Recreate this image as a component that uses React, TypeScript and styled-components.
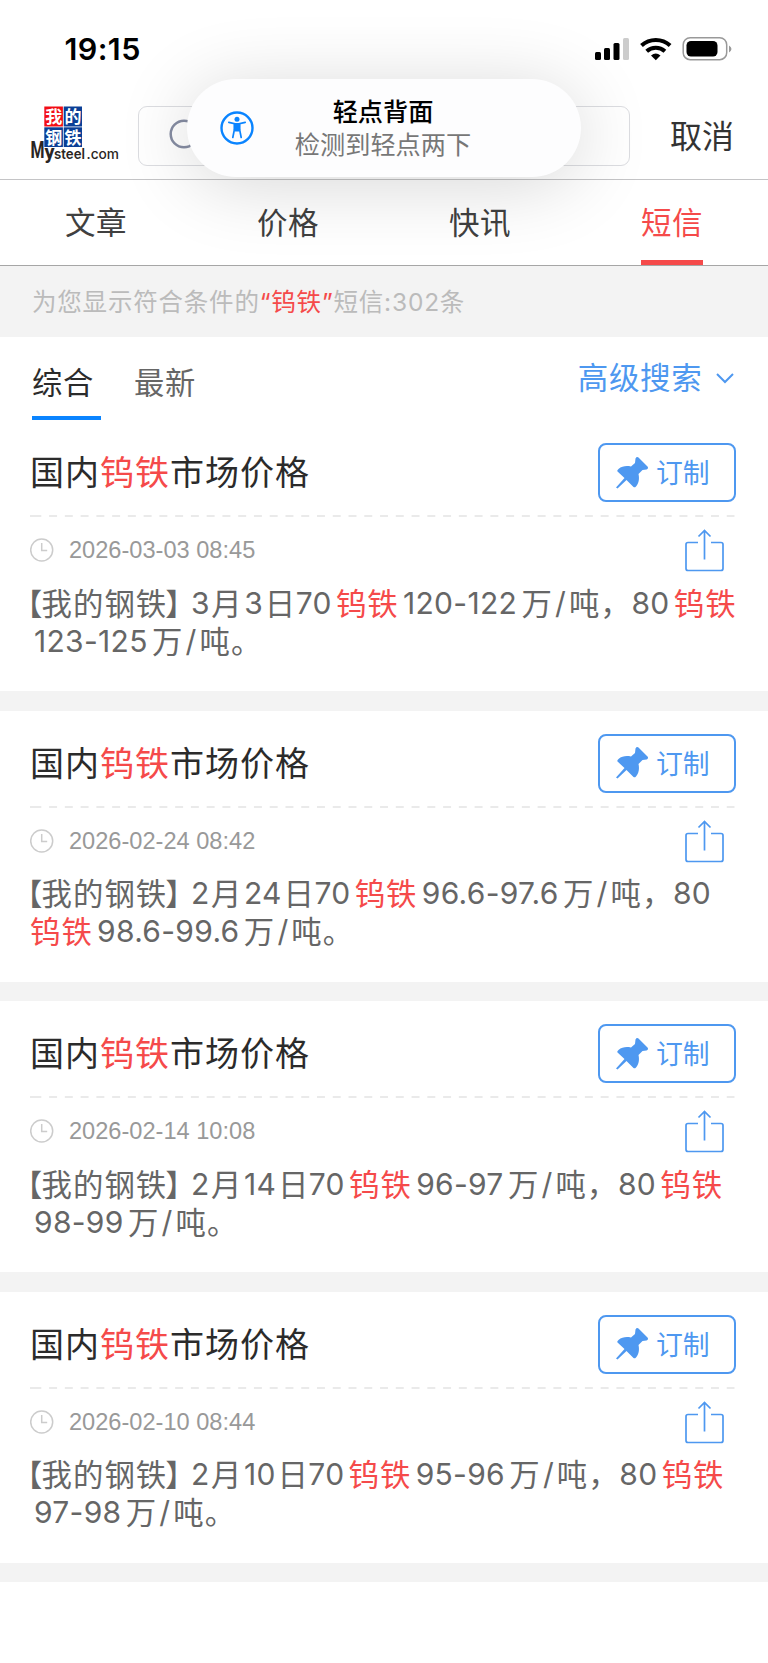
import React from 'react';
import styled, { createGlobalStyle } from 'styled-components';

const cjk = '"Noto Sans CJK SC", sans-serif';
const latin = 'Inter, "Noto Sans CJK SC", sans-serif';
const RED = '#f54a4a';
const BLUE = '#4e98f0';

const Global = createGlobalStyle`
  * { box-sizing: border-box; }
  body { margin: 0; background: #fff; font-family: ${cjk}; color: #333; }
`;
const Page = styled.main`
  position: relative;
  width: 768px;
  height: 1663px;
  overflow: hidden;
  background: #fff;
  white-space: nowrap;
`;
const StatusBar = styled.div`
  height: 97px;
  padding: 30px 35px 0 64.5px;
  display: flex;
  justify-content: space-between;
  align-items: flex-start;
`;
const Clock = styled.span`
  font: 600 30.5px/38px Inter, sans-serif;
  letter-spacing: 0.4px;
  color: #000;
`;
const StatusIcons = styled.svg`
  display: block;
  margin-top: 3px;
`;
const Header = styled.header`
  height: 83px;
  display: flex;
  align-items: flex-start;
  border-bottom: 1px solid #c4c4c6;
`;
const Logo = styled.div`
  width: 138px;
  height: 76px;
  padding-left: 30px;
`;
const SearchBox = styled.div`
  width: 492px;
  height: 60px;
  margin-top: 9px;
  padding-left: 30px;
  border: 1px solid #dcdde1;
  border-radius: 9px;
  display: flex;
  align-items: center;
`;
const Cancel = styled.span`
  margin: 13px 0 0 40px;
  font-size: 32px;
  line-height: 48px;
`;
const Tabs = styled.nav`
  height: 86px;
  display: grid;
  grid-template-columns: repeat(4, 1fr);
  justify-items: center;
  border-bottom: 1px solid #a6a6a6;
`;
const Tab = styled.span<{ $on?: boolean }>`
  height: 85px;
  width: 62px;
  font-size: 30.5px;
  letter-spacing: 0.6px;
  line-height: 83px;
  color: ${(p) => (p.$on ? RED : '#404040')};
  border-bottom: ${(p) => (p.$on ? `5px solid ${RED}` : '0')};
`;
const Summary = styled.div`
  height: 71px;
  padding-left: 32px;
  background: #f3f3f3;
  color: #bbb;
  font-family: ${latin};
  font-size: 24.5px;
  letter-spacing: 0.8px;
  line-height: 72px;
`;
const Red = styled.span`
  color: ${RED};
`;
const SortRow = styled.div`
  height: 83px;
  padding: 0 33px 0 32px;
  display: flex;
`;
const Sort = styled.span<{ $on?: boolean }>`
  width: 69px;
  height: 83px;
  margin-right: 33px;
  font-size: 30.3px;
  letter-spacing: 0.7px;
  line-height: 88px;
  color: ${(p) => (p.$on ? '#2b2b2b' : '#666')};
  border-bottom: ${(p) => (p.$on ? '4px solid #0a84ff' : '0')};
`;
const Advanced = styled.div`
  margin-left: auto;
  height: 83px;
  display: flex;
  gap: 13px;
  padding-right: 1.5px;
  color: ${BLUE};
  font-size: 30.5px;
  letter-spacing: 0.7px;
  line-height: 79px;
`;
const Card = styled.article`
  height: 271px;
  padding: 23px 32px 0 30px;
`;
const Gap = styled.div`
  height: 19.6px;
  background: #f3f3f3;
`;
const CardHead = styled.div`
  height: 59px;
  display: flex;
  justify-content: space-between;
`;
const Title = styled.h2`
  margin: 0;
  height: 59px;
  font-size: 34px;
  font-weight: 400;
  letter-spacing: 1px;
  line-height: 56px;
  color: #2b2b2b;
`;
const Subscribe = styled.button`
  width: 138px;
  height: 59px;
  padding: 0 0 0 14.5px;
  display: flex;
  align-items: center;
  gap: 7.5px;
  border: 2px solid ${BLUE};
  border-radius: 8px;
  background: #fff;
  color: ${BLUE};
  font: 400 26.8px/53px ${cjk};
`;
const SubscribeText = styled.span`
  height: 55px;
`;
const Dashes = styled.svg`
  display: block;
  margin-top: 13px;
`;
const Meta = styled.div`
  height: 66px;
  display: flex;
  align-items: center;
`;
const Time = styled.time`
  margin-left: 15px;
  flex: 1;
  color: #999;
  font: 400 23.6px/66px "Liberation Sans", sans-serif;
`;
const Share = styled.svg`
  margin: 1px 12px 0 0;
`;
const Body = styled.div`
  margin-top: 0.5px;
`;
const Line = styled.div`
  display: flex;
  height: 38px;
  line-height: 37px;
  color: #666;
`;
const Run = styled.span<{ $hl?: boolean; $num?: boolean; $x?: number }>`
  color: ${(p) => (p.$hl ? RED : 'inherit')};
  font-family: ${(p) => (p.$num ? latin : cjk)};
  font-size: ${(p) => (p.$num ? 30 : 30.4)}px;
  line-height: ${(p) => (p.$num ? 39 : 37)}px;
  letter-spacing: ${(p) => (p.$num ? 0.3 : 1)}px;
  margin-left: ${(p) => p.$x ?? 0}px;
`;
const Toast = styled.aside`
  position: absolute;
  left: 187px;
  top: 79px;
  width: 394px;
  height: 98px;
  padding: 15px 0 0 32px;
  display: flex;
  border-radius: 49px;
  background: #fdfdfe;
  box-shadow: 0 8px 75px rgba(0, 0, 0, 0.16);
`;
const ToastIcon = styled.svg`
  margin-top: 16px;
`;
const ToastText = styled.div`
  width: 230px;
  margin-left: 13px;
  text-align: center;
  font-size: 25.2px;
  line-height: 33px;
  color: #777;
`;
const ToastTitle = styled.strong`
  display: block;
  color: #000;
  font-weight: 500;
`;

type Part = { t: string; k?: 'n' | 'h'; x?: number };
const num = (t: string, x = 0): Part => ({ t, k: 'n', x });
const text = (t: string, x = 0): Part => ({ t, x });
const hit = (x = 0): Part => ({ t: '钨铁', k: 'h', x });

const opening = (month: string, day: string): Part[] => [
  text('【', -18), text('我的钢铁', -1.8), text('】', -2),
  num(month, -5.5), text('月', 1.3), num(day, 1.5), text('日', 1.8), num('70', -0.5),
];
const price = (range: string, x = 4.3): Part[] => [
  num(range, x), text('万', 4.3), num('/', 2.2), text('吨', 2.8),
];
const firstLine = (month: string, day: string, range: string): Part[] => [
  ...opening(month, day), hit(4.2), ...price(range), text('，'), num('80', -0.4),
];

const items: { time: string; lines: Part[][] }[] = [
  {
    time: '2026-03-03 08:45',
    lines: [[...firstLine('3', '3', '120-122'), hit(4.3)], [...price('123-125', 4), text('。')]],
  },
  {
    time: '2026-02-24 08:42',
    lines: [firstLine('2', '24', '96.6-97.6'), [hit(), ...price('98.6-99.6'), text('。')]],
  },
  {
    time: '2026-02-14 10:08',
    lines: [[...firstLine('2', '14', '96-97'), hit(4.3)], [...price('98-99', 4), text('。')]],
  },
  {
    time: '2026-02-10 08:44',
    lines: [[...firstLine('2', '10', '95-96'), hit(4.3)], [...price('97-98', 4), text('。')]],
  },
];

const LogoMark = () => (
  <svg width="92" height="76" viewBox="30 97 92 76">
    <rect x="44.3" y="106.500" width="18.600" height="20" fill="#f20d14" />
    <rect x="63.700" y="106.500" width="18.300" height="20" fill="#0b3f96" />
    <rect x="44.3" y="127.300" width="18.600" height="19.700" fill="#0b3f96" />
    <rect x="63.700" y="127.300" width="18.300" height="19.700" fill="#0b3f96" />
    <g fill="#fff" fontFamily='"Noto Sans CJK SC", sans-serif' fontWeight="700" fontSize="17">
      <text x="45.200" y="123">我</text>
      <text x="64.400" y="123">的</text>
      <text x="45.200" y="143.700">钢</text>
      <text x="64.400" y="143.700">铁</text>
    </g>
    <g fill="#2a2523" fontWeight="700">
      <text x="30.500" y="157.500" fontFamily="Roboto, sans-serif" fontSize="23" textLength="14" lengthAdjust="spacingAndGlyphs">M</text>
      <text x="44.500" y="158.500" fontFamily="Roboto, sans-serif" fontSize="20">y</text>
      <text x="54" y="158.500" fontFamily="Inter, sans-serif" fontWeight="600" fontSize="14.500" textLength="31" lengthAdjust="spacingAndGlyphs">steel</text>
      <text x="86.500" y="158.500" fontFamily="Inter, sans-serif" fontWeight="500" fontSize="14" textLength="32.500" lengthAdjust="spacingAndGlyphs">.com</text>
    </g>
  </svg>
);
const Pin = () => (
  <svg width="34" height="34" viewBox="0 0 34 34" fill={BLUE}>
    <path d="M1 31.500 9.500 22 2.500 15.500C2 14.500 2.500 14 3.500 13 7 10 11.500 9.500 16 10.500L20 7 20.500 2.500C21 1 22.500 .5 23.500 1.500L32.500 10.500C33.500 11.500 33 13 31.500 13.500L27.500 14 23.500 18C24.500 22.500 24 27 21 30.500 20 31.500 19.300 31.500 18.500 31L11.500 24 2.500 32.500Z" />
  </svg>
);

export default function App() {
  return (
    <Page>
      <Global />
      <StatusBar>
        <Clock>19:15</Clock>
        <StatusIcons width="140" height="30" viewBox="593 33 140 30">
          <rect x="595" y="52" width="6" height="8" rx="1.500" />
          <rect x="604" y="48" width="6" height="12" rx="1.500" />
          <rect x="613.500" y="43" width="6" height="17" rx="1.500" />
          <rect x="623" y="38" width="6" height="22" rx="1.500" fill="#ccc" />
          <g fill="none" stroke="#000" strokeWidth="4">
            <path d="M641.500 45.500a21 21 0 0 1 28.600 0" />
            <path d="M646.700 51.200a13.500 13.500 0 0 1 18.200 0" />
          </g>
          <path d="M651 55.500q4.700-3.800 9.500 0l-4.700 4.800z" />
          <rect x="683.200" y="37.700" width="43.500" height="22" rx="7" fill="none" stroke="#999" strokeWidth="1.500" />
          <rect x="686.500" y="41" width="31" height="15.500" rx="4.500" />
          <path d="M729 45.500q5 3.500 0 7z" fill="#999" />
        </StatusIcons>
      </StatusBar>
      <Header>
        <Logo><LogoMark /></Logo>
        <SearchBox>
          <svg width="34" height="34" viewBox="0 0 34 34" fill="none" stroke="#868da3" strokeWidth="2.500">
            <circle cx="15" cy="15" r="13.300" />
            <path d="m24.500 24.500 7 7" />
          </svg>
        </SearchBox>
        <Cancel>取消</Cancel>
      </Header>
      <Tabs>
        <Tab>文章</Tab>
        <Tab>价格</Tab>
        <Tab>快讯</Tab>
        <Tab $on>短信</Tab>
      </Tabs>
      <Summary>为您显示符合条件的<Red>“钨铁”</Red>短信:302条</Summary>
      <SortRow>
        <Sort $on>综合</Sort>
        <Sort>最新</Sort>
        <Advanced>
          高级搜索
          <svg width="18" height="82" viewBox="0 0 18 82" fill="none" stroke={BLUE} strokeWidth="2">
            <path d="m1 37 8 8 8-8" />
          </svg>
        </Advanced>
      </SortRow>
      {items.map((it) => (
        <React.Fragment key={it.time}>
          <Card>
            <CardHead>
              <Title>国内<Red>钨铁</Red>市场价格</Title>
              <Subscribe><Pin /><SubscribeText>订制</SubscribeText></Subscribe>
            </CardHead>
            <Dashes width="706" height="2">
              <path d="M0 1H4M3.300 1H704.500" stroke="#e4e4e4" strokeWidth="1.500" strokeDasharray="8 7.760" />
            </Dashes>
            <Meta>
              <svg width="24" height="24" viewBox="0 0 24 24" fill="none" stroke="#ccc" strokeWidth="1.500">
                <circle cx="11.700" cy="12" r="11" />
                <path d="M11.700 5v7.500h5.500" />
              </svg>
              <Time>{it.time}</Time>
              <Share width="39" height="43" viewBox="0 0 39 43" fill="none" stroke={BLUE} strokeWidth="1.700">
                <path d="M13 13.500H3q-2 0-2 2V39.500q0 2 2 2H36q2 0 2-2V15.500q0-2-2-2H26M19.500 30.500V2M13.500 7.500l6-6 6 6" />
              </Share>
            </Meta>
            <Body>
              {it.lines.map((ln, j) => (
                <Line key={j}>
                  {ln.map((r, k) => (
                    <Run key={k} $hl={r.k === 'h'} $num={r.k === 'n'} $x={r.x}>{r.t}</Run>
                  ))}
                </Line>
              ))}
            </Body>
          </Card>
          <Gap />
        </React.Fragment>
      ))}
      <Toast>
        <ToastIcon width="36" height="36" viewBox="0 0 36 36">
          <circle cx="18" cy="18" r="15.500" fill="none" stroke="#0a84ff" strokeWidth="2.400" />
          <circle cx="18" cy="9.300" r="2.500" fill="#0a84ff" />
          <path d="M9.800 12.300 15.500 13.600V19L13.800 27.500M26.200 12.300 20.500 13.600V19L22.200 27.500" fill="none" stroke="#0a84ff" strokeWidth="1.700" strokeLinecap="round" />
          <path d="M14.700 12.900h6.600V19.500L20 21.500h-4L14.700 19.500z" fill="#0a84ff" />
        </ToastIcon>
        <ToastText><ToastTitle>轻点背面</ToastTitle>检测到轻点两下</ToastText>
      </Toast>
    </Page>
  );
}
